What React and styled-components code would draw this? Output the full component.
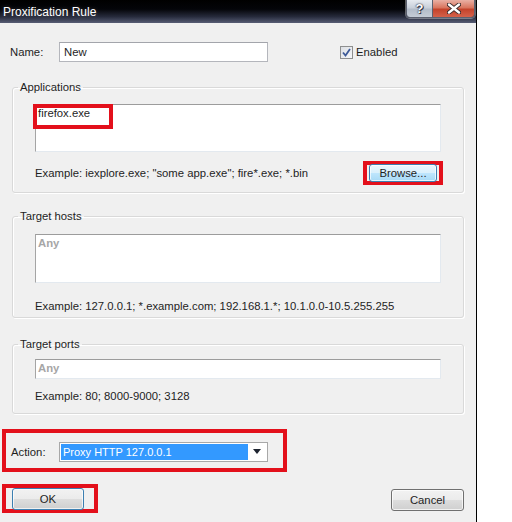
import styled, { createGlobalStyle } from "styled-components";

const GlobalStyle = createGlobalStyle`
  body {
    margin: 0;
    background: #ffffff;
    font-family: "Liberation Sans", Arial, sans-serif;
    font-size: 11.3px;
    color: #1e1e1e;
  }
`;

const Window = styled.div`
  width: 476px;
  height: 522px;
  border-right: 1px solid #000;
  background: #f0f0f0;
  display: flex;
  flex-direction: column;
  overflow: hidden;
`;

const TitleBar = styled.div`
  height: 23px;
  flex-shrink: 0;
  display: flex;
  justify-content: space-between;
  align-items: flex-start;
  background: linear-gradient(to bottom, #000 0%, #040509 40%, #262a3b 72%, #575d75 100%);
`;

const Title = styled.div`
  color: #fff;
  font-size: 12px;
  line-height: 14px;
  padding: 5px 0 0 3px;
  text-shadow: 0 0 4px rgba(255, 255, 255, 0.25);
`;

const Caption = styled.div`
  display: flex;
  height: 17px;
  margin-right: 1px;
  border: 1px solid #5c6170;
  border-top: none;
  border-radius: 0 0 4px 4px;
  overflow: hidden;
  box-shadow: 0 0 0 1px rgba(255, 255, 255, 0.35);
`;

const CaptionBtn = styled.div`
  width: ${(p) => (p.$close ? "41px" : "25px")};
  display: flex;
  align-items: center;
  justify-content: center;
  background: ${(p) =>
    p.$close
      ? "linear-gradient(to bottom, #e9b0a4 0%, #d9765f 45%, #c4432b 55%, #d4614a 100%)"
      : "linear-gradient(to bottom, #e6eaf0 0%, #c9d0da 45%, #b3bcc9 55%, #c5ccd6 100%)"};
  border-left: ${(p) => (p.$close ? "1px solid #5c6170" : "none")};
  color: #fff;
  font-size: 13px;
  font-weight: bold;
  text-shadow: 0 0 1px #2b2b3a, 0 0 2px #2b2b3a, 1px 1px 0 #3a3a4a;
`;

const Body = styled.div`
  flex: 1;
  display: flex;
  flex-direction: column;
`;

const NameRow = styled.div`
  display: flex;
  align-items: center;
  padding: 19px 0 0 10px;
  height: 20px;
`;

const Label = styled.span`
  width: ${(p) => p.$w || 49}px;
  flex-shrink: 0;
`;

const TextInput = styled.div`
  box-sizing: border-box;
  width: 209px;
  height: 20px;
  border: 1px solid #b4b6bc;
  border-top-color: #a3a5ab;
  background: #fff;
  padding: 0 4px;
  display: flex;
  align-items: center;
`;

const CheckWrap = styled.label`
  display: flex;
  align-items: center;
  margin-left: 72px;
  gap: 3px;
`;

const CheckBox = styled.span`
  box-sizing: border-box;
  width: 13px;
  height: 13px;
  border: 1px solid #8e8f8f;
  background: linear-gradient(135deg, #dcdfe4 0%, #f6f7f9 100%);
  display: flex;
  align-items: center;
  justify-content: center;
`;

const Group = styled.fieldset`
  box-sizing: border-box;
  width: 452px;
  margin: ${(p) => p.$top}px 0 0 12px;
  padding: 0;
  border: 1px solid #d9d9d9;
  border-radius: 3px;
  box-shadow: inset 1px 1px 0 #fff, 1px 1px 0 #fff;
  min-width: 0;
`;

const Legend = styled.legend`
  padding: 0 2px;
  margin-left: 5px;
  line-height: 14px;
`;

const GroupInner = styled.div`
  padding: 0 22px ${(p) => p.$bottom}px;
`;

const Box = styled.div`
  position: relative;
  box-sizing: border-box;
  height: ${(p) => p.$h}px;
  margin-top: ${(p) => p.$top}px;
  background: #fff;
  border: 1px solid #e3e9ef;
  border-top-color: #9c9c9c;
  border-left-color: #a5a5a5;
  padding: 1px 2px;
  line-height: 14px;
`;

const Placeholder = styled.span`
  color: #a6a6a6;
  font-weight: bold;
`;

const Mark = styled.div`
  box-sizing: border-box;
  border: 4px solid #e3101b;
`;

const FileMark = styled(Mark)`
  position: absolute;
  left: -3px;
  top: -1px;
  width: 80px;
  height: 25px;
`;

const ExampleRow = styled.div`
  display: flex;
  align-items: center;
  justify-content: space-between;
  margin-top: ${(p) => p.$top}px;
  min-height: 14px;
  line-height: 14px;
`;

const BrowseMark = styled(Mark)`
  width: 80px;
  height: 24px;
  margin-right: -2px;
  display: flex;
  align-items: center;
  justify-content: center;
`;

const Button = styled.div`
  box-sizing: border-box;
  width: ${(p) => p.$w}px;
  height: ${(p) => p.$h || 22}px;
  display: flex;
  align-items: center;
  justify-content: center;
  border: 1px solid ${(p) => (p.$focus ? "#3c7fb1" : "#707070")};
  border-radius: 3px;
  background: ${(p) =>
    p.$hover
      ? "linear-gradient(to bottom, #eaf6fd 0%, #d9f0fc 50%, #bee6fd 51%, #a7d9f5 100%)"
      : "linear-gradient(to bottom, #f2f2f2 0%, #ebebeb 50%, #dddddd 51%, #cfcfcf 100%)"};
  box-shadow: inset 0 0 0 1px rgba(255, 255, 255, 0.7);
  color: #1e1e1e;
`;

const ActionMark = styled(Mark)`
  width: 285px;
  height: 43px;
  margin: 15px 0 0 2px;
  padding: 2px 0 0 5px;
  display: flex;
  align-items: center;
`;

const Select = styled.div`
  box-sizing: border-box;
  width: 209px;
  height: 20px;
  border: 1px solid #a8a8a8;
  background: #fff;
  padding: 1px;
  display: flex;
  align-items: center;
`;

const Selected = styled.div`
  width: 187px;
  height: 16px;
  background: #3399ff;
  color: #fff;
  padding-left: 2px;
  box-sizing: border-box;
  line-height: 16px;
  font-size: 11px;
`;

const Arrow = styled.div`
  flex: 1;
  display: flex;
  justify-content: center;
`;

const Footer = styled.div`
  display: flex;
  justify-content: space-between;
  align-items: flex-start;
  margin-top: 12px;
  padding-right: 12px;
`;

const OkMark = styled(Mark)`
  width: 96px;
  height: 29px;
  margin-left: 2px;
  padding-left: 6px;
`;

const CancelWrap = styled.div`
  margin-top: 5px;
`;

export default function App() {
  return (
    <>
      <GlobalStyle />
      <Window>
        <TitleBar>
          <Title>Proxification Rule</Title>
          <Caption>
            <CaptionBtn>?</CaptionBtn>
            <CaptionBtn $close>
              <svg width="14" height="11" viewBox="0 0 14 11">
                <path d="M2 1.5 L12 9.5 M12 1.5 L2 9.5" stroke="#3a2a2a" strokeWidth="4.2" strokeLinecap="round" />
                <path d="M2 1.5 L12 9.5 M12 1.5 L2 9.5" stroke="#ffffff" strokeWidth="2.4" strokeLinecap="round" />
              </svg>
            </CaptionBtn>
          </Caption>
        </TitleBar>
        <Body>
          <NameRow>
            <Label>Name:</Label>
            <TextInput>New</TextInput>
            <CheckWrap>
              <CheckBox>
                <svg width="9" height="9" viewBox="0 0 9 9">
                  <path d="M1 4.5 L3.5 7.5 L8 1" fill="none" stroke="#3d5a98" strokeWidth="1.8" />
                </svg>
              </CheckBox>
              Enabled
            </CheckWrap>
          </NameRow>

          <Group $top={18}>
            <Legend>Applications</Legend>
            <GroupInner $bottom={7}>
              <Box $h={48} $top={10}>
                firefox.exe
                <FileMark />
              </Box>
              <ExampleRow $top={9}>
                <span>Example: iexplore.exe; "some app.exe"; fire*.exe; *.bin</span>
                <BrowseMark>
                  <Button $w={68} $h={18} $hover $focus>Browse...</Button>
                </BrowseMark>
              </ExampleRow>
            </GroupInner>
          </Group>

          <Group $top={16}>
            <Legend>Target hosts</Legend>
            <GroupInner $bottom={4}>
              <Box $h={49} $top={11}>
                <Placeholder>Any</Placeholder>
              </Box>
              <ExampleRow $top={16}>
                <span>Example: 127.0.0.1; *.example.com; 192.168.1.*; 10.1.0.0-10.5.255.255</span>
              </ExampleRow>
            </GroupInner>
          </Group>

          <Group $top={19}>
            <Legend>Target ports</Legend>
            <GroupInner $bottom={10}>
              <Box $h={20} $top={8}>
                <Placeholder>Any</Placeholder>
              </Box>
              <ExampleRow $top={10}>
                <span>Example: 80; 8000-9000; 3128</span>
              </ExampleRow>
            </GroupInner>
          </Group>

          <ActionMark>
            <Label $w={48}>Action:</Label>
            <Select>
              <Selected>Proxy HTTP 127.0.0.1</Selected>
              <Arrow>
                <svg width="8" height="5" viewBox="0 0 8 5">
                  <path d="M0 0 H8 L4 5 Z" fill="#1e2430" />
                </svg>
              </Arrow>
            </Select>
          </ActionMark>

          <Footer>
            <OkMark>
              <Button $w={72} $focus>OK</Button>
            </OkMark>
            <CancelWrap>
              <Button $w={73}>Cancel</Button>
            </CancelWrap>
          </Footer>
        </Body>
      </Window>
    </>
  );
}
